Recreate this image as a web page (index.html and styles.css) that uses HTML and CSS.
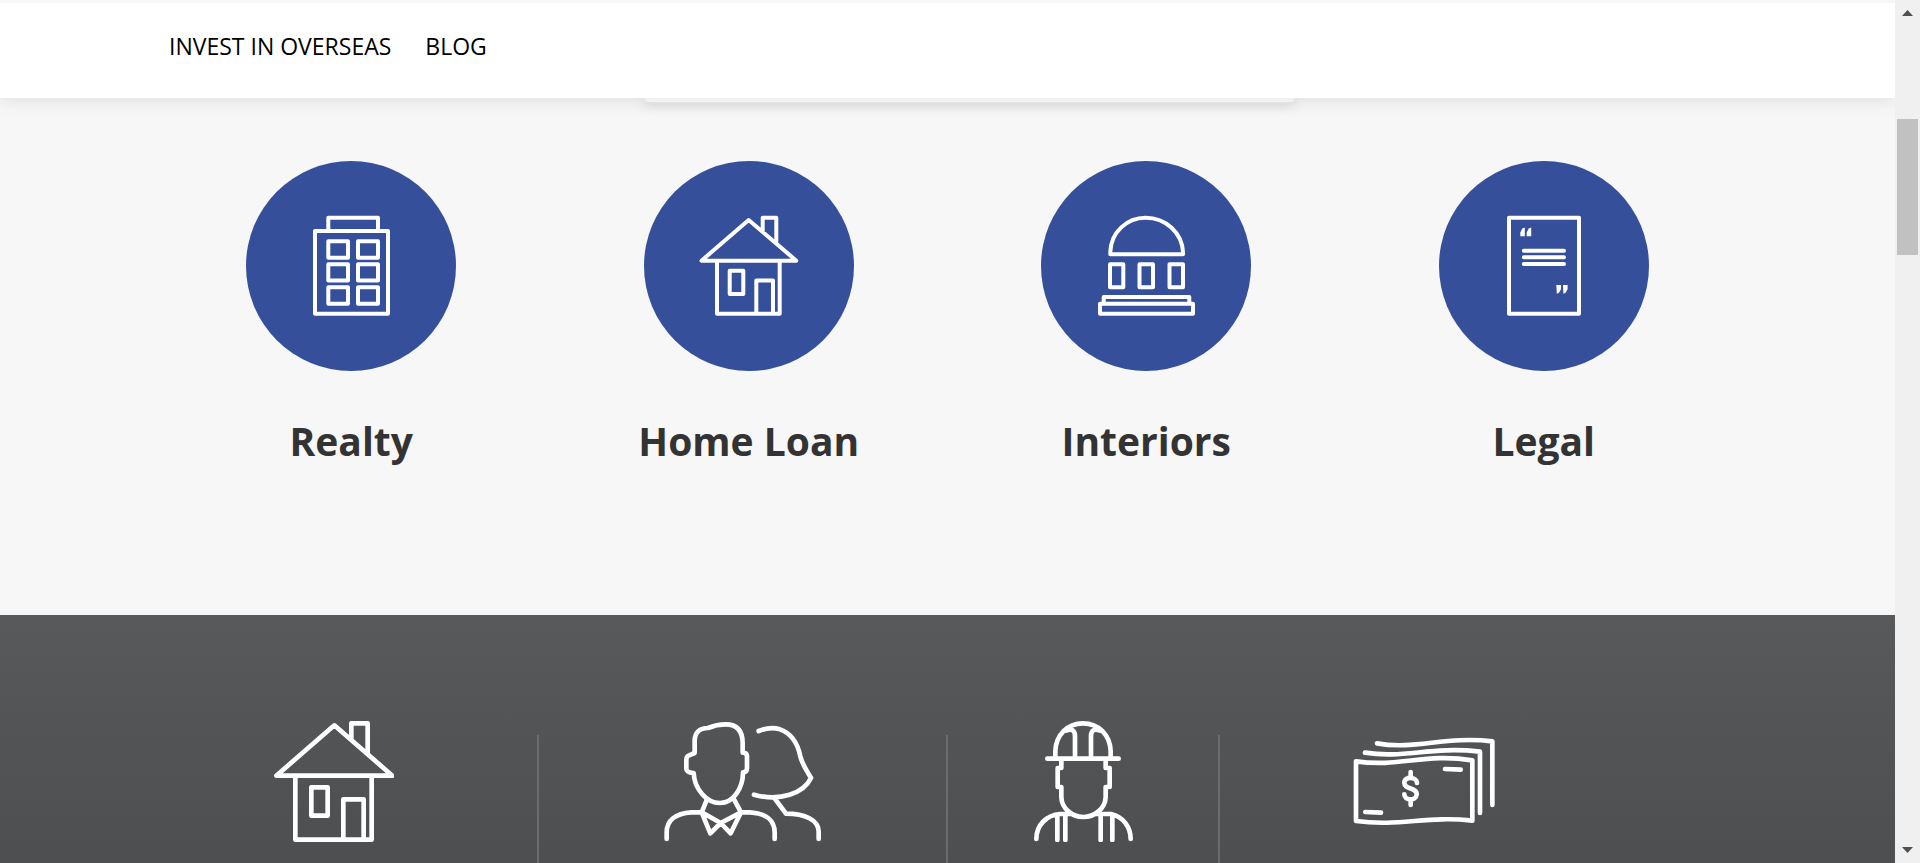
FILE: index.html
```html
<!DOCTYPE html>
<html lang="en">
<head>
<meta charset="utf-8">
<title>Property services</title>
<link rel="stylesheet" href="styles.css">
</head>
<body>
<div class="page">
  <header class="header">
    <nav class="nav">
      <a href="#overseas">INVEST IN OVERSEAS</a>
      <a href="#blog">BLOG</a>
    </nav>
  </header>
  <main>
    <section class="services">
      <div class="panel"></div>
      <div class="service-grid">
        <a class="service" href="#realty">
          <svg class="service-icon" viewBox="0 0 210 210" aria-hidden="true">
            <path d="M69 70H142V152.7H69ZM82.3 70V56.7H132V70M82.3 80.3H102V96.7H82.3ZM112 80.3H132V96.7H112ZM82.3 103.3H102V119.5H82.3ZM112 103.3H132V119.5H112ZM82.3 126.3H102V142.7H82.3ZM112 126.3H132V142.7H112Z"/>
          </svg>
          <h2>Realty</h2>
        </a>
        <a class="service" href="#loan">
          <svg class="service-icon" viewBox="0 0 210 210" aria-hidden="true">
            <path d="M104.7 59L57.5 99.7H152.3ZM118.7 71V56.7H132.3V82M73 99.7V152.7H135.7V99.7M85.7 109.7H99.3V133H85.7ZM112.3 152.7V119.5H129V152.7"/>
          </svg>
          <h2>Home Loan</h2>
        </a>
        <a class="service" href="#interiors">
          <svg class="service-icon" viewBox="0 0 210 210" aria-hidden="true">
            <path stroke-linejoin="miter" d="M69.3 93.2V91C70 71 86 56.7 104.5 56.7C125 56.7 141 72 142 91V93.2Z"/>
            <path d="M69 103.3H82.3V126.3H69ZM98.5 103.3H112V126.3H98.5ZM128.5 103.3H142V126.3H128.5ZM62.7 142.7V136H148.3V142.7M59 142.7H152V152.7H59Z"/>
          </svg>
          <h2>Interiors</h2>
        </a>
        <a class="service" href="#legal">
          <svg class="service-icon" viewBox="0 0 210 210" aria-hidden="true">
            <path d="M70 56.7H140V152.7H70ZM84.8 89.7H125M84.8 96.3H125M84.8 103H125"/>
            <path class="solid" d="M81.3 75.3V71.5L83.3 67.5 85.8 66.5V75.3ZM87.7 75.3V71.5L89.7 67.5 92.2 66.5V75.3ZM117.3 124H122V128.3L120 131.7 117.8 132.8ZM124 124H128.6V128.3L126.6 131.7 124.4 132.8Z"/>
          </svg>
          <h2>Legal</h2>
        </a>
      </div>
    </section>
    <section class="stats">
      <div class="stats-grid">
        <div class="stat">
          <svg width="120" height="121" viewBox="42 63 360 363" aria-hidden="true">
            <path d="M223 76L49 227H397ZM274 120V70H323V160M106 227V419H335V227M154 262H203V347H154ZM250 419V298H311V419"/>
          </svg>
        </div>
        <div class="stat">
          <svg width="158" height="121" viewBox="42 63 474 363" aria-hidden="true">
            <path d="M134 159V123C134 96 150 84 174 84C193 76 208 73 227 73C264 73 278 96 278 130V158Q291 158 291 169V205Q291 217 279 217C279 265 250 309 210 309C168 309 133 265 131 219Q109 217 109 206V179Q109 169 117 166Z"/>
            <path d="M171 298L155 337L181 400L212 369L242 400L273 337L252 298M155 337L212 369L273 337M155 337H124C76 340 50 361 50 397V417M273 337H300C348 340 374 361 374 397V417M326 93C350 83 371 82 390 88C425 100 443 130 451 169C457 194 471 213 483 234C461 280 390 306 312 284M374 295L408 341C465 341 506 360 506 395V417"/>
          </svg>
        </div>
        <div class="stat">
          <svg width="100" height="121" viewBox="72 63 300 363" aria-hidden="true">
            <path d="M112 176H326M136 175V153C138 105 172 70 219 70C266 70 300 105 302 153V175M168 92C186 84 195 92 195 108V175M270 92C252 84 243 92 243 108V175M154 181V204H143V261H154V291C155 326 187 351 220 351C253 351 286 326 287 291V261H299V204H287V181M184 342H150C111 345 79 374 79 417M256 342H303C340 350 362 382 362 417M142 347V420M166 347V420M272 347V420M307 347V420"/>
          </svg>
        </div>
        <div class="stat">
          <svg width="144" height="121" viewBox="66 63 432 363" aria-hidden="true">
            <path d="M78 184C210 203 285 158 427 181V362C292 346 208 381 78 363ZM105 158C223 177 300 138 450 155V339M141 130C255 151 346 107 487 124V315M345 207L392 209M106 336L153 338"/>
            <path d="M261 249C261 230 223 228 223 248C223 270 262 261 260 284C258 303 223 303 223 283M242 216V233M242 299V315"/>
          </svg>
        </div>
      </div>
    </section>
  </main>
</div>
<div class="scrollbar" aria-hidden="true">
  <svg width="11" height="6" viewBox="0 0 11 6"><path d="M0 6L5.5 0 11 6Z"/></svg>
  <div class="track"><div class="thumb"></div></div>
  <svg width="11" height="6" viewBox="0 0 11 6"><path d="M0 0L5.5 6 11 0Z"/></svg>
</div>
</body>
</html>
```
FILE: styles.css
```css
* {
  box-sizing: border-box;
}

body {
  display: flex;
  height: 100vh;
  margin: 0;
  overflow: hidden;
  background: #f7f7f7;
  font-family: "Open Sans", "Noto Sans", sans-serif;
}

.page {
  display: flex;
  flex: 1;
  flex-direction: column;
  min-width: 0;
  overflow: hidden;
}

main {
  display: flex;
  flex: 1;
  flex-direction: column;
}

.header {
  position: relative;
  z-index: 1;
  flex: none;
  border-top: 3px solid #f7f7f7;
  background: #fff;
  box-shadow: 0 0 20px rgba(0, 0, 0, 0.13);
}

.nav {
  display: flex;
  gap: 34px;
  max-width: 1635px;
  margin: 0 auto;
  padding: 27px 39px 36px;
}

.nav a {
  color: #000;
  font-size: 23px;
  font-weight: 500;
  line-height: 32px;
  text-decoration: none;
}

.services {
  flex: none;
  padding-bottom: 146px;
}

.panel {
  width: 651px;
  height: 5px;
  margin: 0 auto 58px;
  border-bottom: 1px solid #eee;
  border-radius: 0 0 5px 5px;
  background: #fff;
  box-shadow: 0 2px 12px rgba(0, 0, 0, 0.18);
  transform: translateX(22px);
}

.service-grid {
  display: grid;
  grid-template-columns: repeat(4, 1fr);
  max-width: 1590px;
  margin: 0 auto;
}

.service {
  display: flex;
  flex-direction: column;
  align-items: center;
  gap: 42px;
  color: #333;
  text-decoration: none;
}

.service h2 {
  margin: 0;
  font-size: 39px;
  font-weight: 700;
  line-height: 56px;
}

.service-icon {
  width: 210px;
  height: 210px;
  border-radius: 50%;
  background: #354f9a;
}

.service-icon path,
.stat path {
  fill: none;
  stroke: #fff;
  stroke-linecap: round;
  stroke-linejoin: round;
}

.service-icon path {
  stroke-width: 4;
}

.service-icon .solid {
  fill: #fff;
  stroke: none;
}

.stats {
  flex: 1;
  padding-top: 106px;
  background: linear-gradient(#58595b, #4b4c4e);
}

.stats-grid {
  display: grid;
  grid-template-columns: 3fr 3fr 2fr 3fr 1fr;
  max-width: 1635px;
  margin: 0 auto;
}

.stat {
  position: relative;
  display: flex;
  justify-content: center;
  height: 200px;
}

.stat + .stat::before {
  content: "";
  position: absolute;
  top: 14px;
  bottom: 0;
  left: -2px;
  width: 2px;
  background: #6b6c6e;
}

.stat path {
  stroke-width: 14;
}

.scrollbar {
  display: flex;
  flex: none;
  flex-direction: column;
  align-items: center;
  width: 25px;
  padding: 10px 0;
  background: #f0f0f0;
}

.scrollbar path {
  fill: #505050;
}

.track {
  flex: 1;
  padding-top: 103px;
}

.thumb {
  width: 21px;
  height: 136px;
  background: #c1c1c1;
}
```
